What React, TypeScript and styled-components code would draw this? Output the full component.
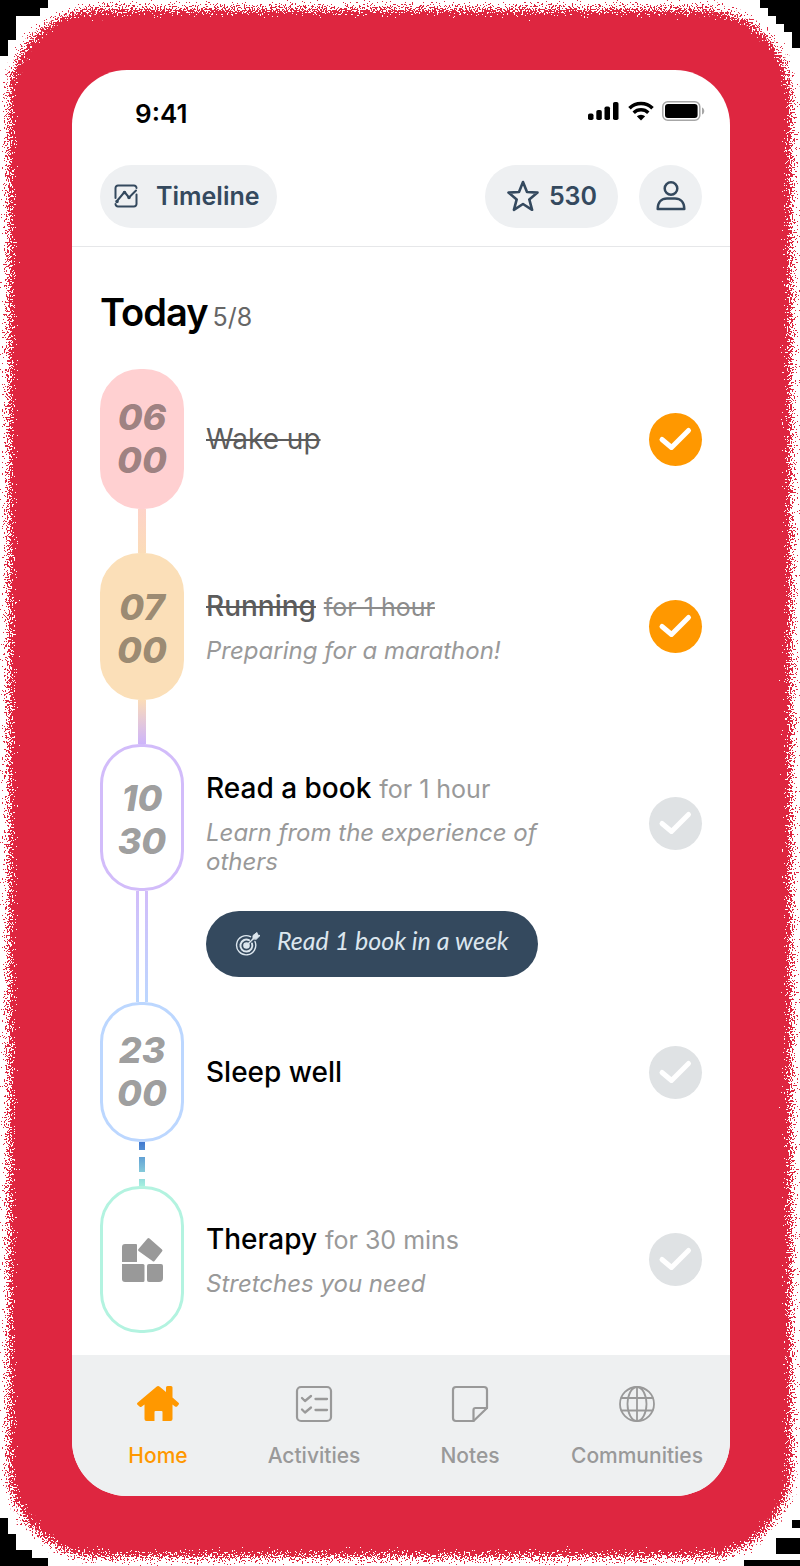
import React, { useState } from "react";
import styled, { createGlobalStyle, css } from "styled-components";

const Global = createGlobalStyle`
  *, *::before, *::after { box-sizing: border-box; }
  body { margin: 0; background: #ffffff; font-family: Inter, "Liberation Sans", sans-serif; }
  button, input { font: inherit; }
`;

const Page = styled.div`
  position: relative;
  isolation: isolate;
  overflow: hidden;
  padding: 70px 70px 70px 72px;
  background:
    conic-gradient(#000 0 0) 0 0 / 48px 8px no-repeat,
    conic-gradient(#000 0 0) 0 8px / 40px 8px no-repeat,
    conic-gradient(#000 0 0) 0 16px / 16px 8px no-repeat,
    conic-gradient(#000 0 0) 0 24px / 16px 16px no-repeat,
    conic-gradient(#000 0 0) 0 40px / 8px 16px no-repeat,
    conic-gradient(#000 0 0) 100% 0 / 40px 8px no-repeat,
    conic-gradient(#000 0 0) 100% 8px / 32px 8px no-repeat,
    conic-gradient(#000 0 0) 100% 16px / 24px 8px no-repeat,
    conic-gradient(#000 0 0) 100% 24px / 16px 8px no-repeat,
    conic-gradient(#000 0 0) 100% 32px / 8px 16px no-repeat,
    conic-gradient(#000 0 0) 0 100% / 48px 8px no-repeat,
    conic-gradient(#000 0 0) 0 calc(100% - 8px) / 32px 8px no-repeat,
    conic-gradient(#000 0 0) 0 calc(100% - 16px) / 16px 16px no-repeat,
    conic-gradient(#000 0 0) 0 calc(100% - 32px) / 8px 16px no-repeat,
    conic-gradient(#000 0 0) 100% 100% / 56px 6px no-repeat,
    conic-gradient(#000 0 0) 100% calc(100% - 12px) / 24px 16px no-repeat,
    conic-gradient(#000 0 0) 100% calc(100% - 38px) / 8px 8px no-repeat,
    #fff;
`;

const Glow = styled.div`
  position: absolute;
  z-index: -1;
  inset: 9px;
  border-radius: 90px;
  background: #de2841;
  filter: url(#rough-edge);
`;

const Filters = styled.svg`
  position: absolute;
  width: 0;
  height: 0;
`;

const Phone = styled.main`
  display: flex;
  flex-direction: column;
  overflow: hidden;
  border-radius: 55px;
  background: #fff;
`;

const StatusBar = styled.div`
  display: flex;
  align-items: center;
  justify-content: space-between;
  height: 86px;
  padding: 0 25px 0 63px;
  font-size: 26px;
  font-weight: 600;
`;

const StatusIcons = styled.div`
  display: flex;
  align-items: center;
  gap: 8px;
  padding-bottom: 4px;
`;

const TopBar = styled.header`
  display: flex;
  align-items: center;
  gap: 21px;
  height: 91px;
  padding: 0 28px 10px;
  border-bottom: 1px solid #e6e7e9;
`;

const Chip = styled.button<{ $round?: boolean }>`
  display: flex;
  align-items: center;
  justify-content: center;
  height: 63px;
  width: ${(p) => (p.$round ? "63px" : "auto")};
  padding: ${(p) => (p.$round ? "0" : "0 21px 0 22px")};
  gap: 10px;
  border: 0;
  border-radius: 32px;
  background: #eef0f2;
  color: #34495e;
  font-size: 25px;
  font-weight: 600;
`;

const TimelineChip = styled(Chip)`
  margin-right: auto;
  padding: 0 17px 0 13px;
  gap: 17px;
`;

const Schedule = styled.section`
  padding: 39px 28px 22px;
`;

const Heading = styled.h1`
  display: flex;
  align-items: baseline;
  gap: 5px;
  margin: 0 0 26px;
  font-size: 38px;
  line-height: 52px;
  font-weight: 600;
  letter-spacing: -1px;
`;

const Count = styled.span`
  color: #666;
  font-size: 25px;
  font-weight: 400;
  letter-spacing: 0;
`;

const List = styled.ol`
  margin: 0;
  padding: 0;
  list-style: none;
`;

const Row = styled.li`
  display: grid;
  grid-template-columns: 84px minmax(0, 1fr);
  column-gap: 22px;
`;

const Rail = styled.div`
  display: flex;
  flex-direction: column;
  align-items: center;
`;

const Pill = styled.div<{ $tall?: boolean; $fill?: string; $line?: string }>`
  display: flex;
  align-items: center;
  justify-content: center;
  width: 84px;
  height: ${(p) => (p.$tall ? 147 : 140)}px;
  border: 3px solid ${(p) => p.$line ?? p.$fill};
  border-radius: 40px;
  background: ${(p) => p.$fill ?? "#fff"};
`;

const Clock = styled.time<{ $tall?: boolean }>`
  display: flex;
  flex-direction: column;
  padding-top: ${(p) => (p.$tall ? 4 : 0)}px;
  color: rgba(0, 0, 0, 0.4);
  font-size: 36px;
  line-height: 43px;
  font-weight: 800;
  font-style: italic;
  text-align: center;
`;

type Link = "solid" | "double" | "dashed";

const Connector = styled.div<{ $kind: Link; $from: string; $to: string }>`
  flex: 1;
  min-height: 44px;
  ${(p) =>
    p.$kind === "solid" &&
    css`
      width: 8px;
      background: linear-gradient(${p.$from}, ${p.$to});
    `}
  ${(p) =>
    p.$kind === "double" &&
    css`
      width: 12px;
      background:
        linear-gradient(#fff, #fff) center / 6px 100% no-repeat,
        linear-gradient(${p.$from}, ${p.$to});
    `}
  ${(p) =>
    p.$kind === "dashed" &&
    css`
      width: 6px;
      background:
        repeating-linear-gradient(transparent 0 8px, #fff 8px 15px, transparent 15px 22px),
        linear-gradient(${p.$from}, ${p.$to});
    `}
`;

const Body = styled.div<{ $gap?: boolean }>`
  padding-bottom: ${(p) => (p.$gap ? "25px" : "0")};
`;

const Main = styled.div<{ $height: number }>`
  display: flex;
  align-items: center;
  justify-content: space-between;
  gap: 60px;
  min-height: ${(p) => p.$height}px;
`;

const Copy = styled.div`
  min-width: 0;
  max-width: 384px;
`;

const Title = styled.label`
  display: block;
  font-size: 28px;
  line-height: 34px;
`;

const Name = styled.span<{ $done?: boolean; $light?: boolean }>`
  color: ${(p) => (p.$done ? "#5c5c5c" : "#000")};
  font-weight: ${(p) => (p.$light ? 400 : 500)};
  text-decoration: ${(p) => (p.$done ? "line-through" : "none")};
`;

const Duration = styled.span<{ $done?: boolean }>`
  color: ${(p) => (p.$done ? "#8c8c8c" : "#999")};
  font-size: 25px;
  text-decoration: ${(p) => (p.$done ? "line-through" : "none")};
`;

const Note = styled.p`
  margin: 12px 0 0;
  color: #999;
  font-size: 24px;
  line-height: 29px;
  font-style: italic;
`;

const Tick = styled.span`
  display: grid;
  flex: none;
  width: 53px;
  height: 53px;

  > * { grid-area: 1 / 1; }
  > svg { pointer-events: none; }
`;

const TickInput = styled.input`
  appearance: none;
  width: 53px;
  height: 53px;
  margin: 0;
  border-radius: 50%;
  background: #dfe2e4;
  &:checked { background: #ff9800; }
`;

const Goal = styled.button`
  display: flex;
  align-items: center;
  gap: 16px;
  height: 66px;
  margin-top: 9px;
  padding: 0 29px;
  border: 0;
  border-radius: 33px;
  background: #34495e;
  color: #dce6ee;
  font-family: Lato, "Open Sans", sans-serif;
  font-size: 25px;
  font-style: italic;
`;

const GoalText = styled.span`
  padding-bottom: 8px;
`;

const Nav = styled.nav`
  display: grid;
  grid-template-columns: 156fr 156fr 156fr 178fr;
  height: 141px;
  padding: 29px 4px 0 8px;
  background: #eef0f1;
`;

const NavLink = styled.a<{ $active?: boolean }>`
  display: flex;
  flex-direction: column;
  align-items: center;
  gap: 18px;
  color: ${(p) => (p.$active ? "#ff9800" : "#999")};
  font-size: 21px;
  line-height: 28px;
  font-weight: 500;
  text-decoration: none;
`;

const line = { fill: "none", stroke: "currentColor", strokeLinecap: "round", strokeLinejoin: "round" } as const;

const SignalIcon = () => (
  <svg width="32" height="20" viewBox="0 0 32 20" aria-hidden="true">
    <rect x="0" y="12.500" width="5.500" height="6.500" rx="1.800" />
    <rect x="8.300" y="9" width="5.500" height="10" rx="1.800" />
    <rect x="16.500" y="5.500" width="5.500" height="13.500" rx="1.800" />
    <rect x="25" y="1" width="5.500" height="18" rx="1.800" />
  </svg>
);

const WifiIcon = () => (
  <svg width="26" height="20" viewBox="0 0 26 20" aria-hidden="true">
    <path d="M1.5 7.2a16.5 16.5 0 0 1 23 0" fill="none" stroke="#000" strokeWidth="3.6" />
    <path d="M5.7 11.7a10.5 10.5 0 0 1 14.6 0" fill="none" stroke="#000" strokeWidth="3.4" />
    <path d="M8.8 15.3a6.2 6.2 0 0 1 8.4 0L13 19.6z" />
  </svg>
);

const BatteryIcon = () => (
  <svg width="43" height="20" viewBox="0 0 43 20" aria-hidden="true">
    <rect x="0.8" y="0.8" width="37" height="18.4" rx="5" fill="none" stroke="#a6a6a6" strokeWidth="1.5" />
    <rect x="3" y="3" width="32.6" height="14" rx="3" />
    <path d="M40 6.5c3 1 3 6 0 7z" fill="#a6a6a6" />
  </svg>
);

const TimelineIcon = () => (
  <svg width="26" height="26" viewBox="0 0 26 26" aria-hidden="true" {...line} strokeWidth="2">
    <path d="M2.500 15V5a2.500 2.500 0 0 1 2.500-2.500h16a2.500 2.500 0 0 1 2.500 2.500" />
    <path d="M23.500 11.500V21a2.500 2.500 0 0 1-2.500 2.500H5A2.500 2.500 0 0 1 2.500 21" />
    <path d="M4 18l7.500-9 4.500 5.500L23 7.500" />
    <circle cx="4" cy="18.500" r="0.800" fill="currentColor" />
    <circle cx="11.500" cy="9.500" r="0.800" fill="currentColor" />
    <circle cx="16" cy="14.500" r="0.800" fill="currentColor" />
  </svg>
);

const StarIcon = () => (
  <svg width="32" height="32" viewBox="0 0 32 32" aria-hidden="true" {...line} strokeWidth="2.6">
    <path d="M16 2l4 10 10.500.6-8.200 6.800 2.800 10.400L16 24l-9.100 5.800 2.800-10.400L1.500 12.600 12 12z" />
  </svg>
);

const UserIcon = () => (
  <svg width="32" height="32" viewBox="0 0 32 32" aria-hidden="true" {...line} strokeWidth="2.5">
    <circle cx="16" cy="8.500" r="6.300" />
    <path d="M2.700 29c0-7 4-10.500 9.300-10.500h8c5.300 0 9.300 3.500 9.300 10.500z" />
  </svg>
);

const CheckMark = () => (
  <svg width="53" height="53" viewBox="0 0 53 53" aria-hidden="true" {...line} stroke="#fff" strokeWidth="5">
    <path d="M13 26.500l9.500 8L39.500 17.500" />
  </svg>
);

const BlocksIcon = () => (
  <svg width="42" height="46" viewBox="0 0 42 46" fill="#999" aria-hidden="true">
    <path d="M4 7h11a1 1 0 0 1 1 1v17H1V10a3 3 0 0 1 3-3z" />
    <path d="M26.500 1.500q1-1 2 0L41 12.500q1 1 0 2l-7.500 9.500q-1 1-2 0L17.500 14q-1-1 0-2z" />
    <path d="M1 27h21a1.500 1.500 0 0 1 1.500 1.500v15A1.500 1.500 0 0 1 22 45H4a3 3 0 0 1-3-3z" />
    <path d="M28 27h12a2 2 0 0 1 2 2v12a4 4 0 0 1-4 4H28a2 2 0 0 1-2-2V29a2 2 0 0 1 2-2z" />
  </svg>
);

const TargetIcon = () => (
  <svg width="26" height="26" viewBox="0 0 26 26" aria-hidden="true" {...line} strokeWidth="1.400">
    <path d="M15.500 5.700A9.600 9.600 0 1 0 20 10.500" />
    <path d="M14 9.200A6 6 0 1 0 17 12.500" strokeWidth="2" />
    <circle cx="11.500" cy="14.500" r="2.600" fill="currentColor" />
    <path d="M12 14l7-7" />
    <path d="M18 7.500V4.500L22 1.500l.5 2.500 2.500.5-3.500 3.500z" fill="currentColor" strokeWidth="1" />
  </svg>
);

const HomeIcon = () => (
  <svg width="42" height="40" viewBox="0 0 42 40" fill="currentColor" aria-hidden="true">
    <path d="M19.500 2.800q1.600-1.400 3.200 0L29 8V3.500q0-1.500 1.500-1.500h3.500q1.500 0 1.500 1.500v10l6 5.200q1 1 0 2l-1.200 1.500q-1 1-2.300.3L35.500 20.500V35q0 2-2 2h-8V28q0-1-1-1h-6q-1 0-1 1v9h-8q-2 0-2-2V20.500l-3 2.300q-1 .7-2-.3L.5 20.700q-1-1 0-2z" />
  </svg>
);

const ActivitiesIcon = () => (
  <svg width="40" height="40" viewBox="0 0 40 40" aria-hidden="true" {...line} strokeWidth="2.200">
    <rect x="3" y="3" width="34" height="34" rx="4" />
    <path d="M8 14l3 3 6-5M8 25.500l3 3 6-5M21.500 15h11.500M21.500 26h11.500" strokeWidth="2.300" />
  </svg>
);

const NotesIcon = () => (
  <svg width="40" height="40" viewBox="0 0 40 40" aria-hidden="true" {...line} strokeWidth="2.200">
    <path d="M23.500 37H6a3 3 0 0 1-3-3V6a3 3 0 0 1 3-3h28a3 3 0 0 1 3 3v18z" />
    <path d="M23.500 37V26a2 2 0 0 1 2-2H37" />
  </svg>
);

const GlobeIcon = () => (
  <svg width="40" height="40" viewBox="0 0 40 40" aria-hidden="true" {...line} strokeWidth="1.800">
    <circle cx="20" cy="20" r="17" />
    <ellipse cx="20" cy="20" rx="9.500" ry="17" />
    <path d="M20 3v34M4.500 14h31M4.500 26.500h31" />
  </svg>
);

type Item = {
  id: string;
  time?: [string, string];
  tall?: boolean;
  height: number;
  fill?: string;
  line?: string;
  title: string;
  light?: boolean;
  duration?: string;
  note?: string;
  goal?: string;
  done?: boolean;
  link?: { kind: Link; from: string; to: string };
};

const items: Item[] = [
  { id: "wake", time: ["06", "00"], height: 140, fill: "#ffd0d1", title: "Wake up", light: true, done: true,
    link: { kind: "solid", from: "#fed3c9", to: "#fbdcb8" } },
  { id: "run", time: ["07", "00"], tall: true, height: 147, fill: "#fbdfb8", title: "Running", duration: "for 1 hour",
    note: "Preparing for a marathon!", done: true, link: { kind: "solid", from: "#fbdcb8", to: "#cdb4fb" } },
  { id: "read", time: ["10", "30"], tall: true, height: 158, line: "#d2bcfa", title: "Read a book", duration: "for 1 hour",
    note: "Learn from the experience of others", goal: "Read 1 book in a week",
    link: { kind: "double", from: "#d2bcfa", to: "#bcd7ff" } },
  { id: "sleep", time: ["23", "00"], height: 140, line: "#bcd7ff", title: "Sleep well",
    link: { kind: "dashed", from: "#3f78d0", to: "#a5f0df" } },
  { id: "therapy", tall: true, height: 147, line: "#b3f3e0", title: "Therapy", duration: "for 30 mins",
    note: "Stretches you need" },
];

function TimelineRow({ item }: { item: Item }) {
  const [checked, setChecked] = useState(Boolean(item.done));
  return (
    <Row>
      <Rail>
        <Pill $tall={item.tall} $fill={item.fill} $line={item.line}>
          {item.time ? (
            <Clock $tall={item.tall} dateTime={item.time.join(":")}>
              <span>{item.time[0]}</span>
              <span>{item.time[1]}</span>
            </Clock>
          ) : (
            <BlocksIcon />
          )}
        </Pill>
        {item.link && <Connector $kind={item.link.kind} $from={item.link.from} $to={item.link.to} />}
      </Rail>
      <Body $gap={Boolean(item.goal)}>
        <Main $height={item.height}>
          <Copy>
            <Title htmlFor={item.id}>
              <Name $done={checked} $light={item.light}>{item.title}</Name>{" "}
              {item.duration && <Duration $done={checked}>{item.duration}</Duration>}
            </Title>
            {item.note && <Note>{item.note}</Note>}
          </Copy>
          <Tick>
            <TickInput id={item.id} type="checkbox" checked={checked} onChange={(e) => setChecked(e.target.checked)} />
            <CheckMark />
          </Tick>
        </Main>
        {item.goal && (
          <Goal type="button">
            <TargetIcon />
            <GoalText>{item.goal}</GoalText>
          </Goal>
        )}
      </Body>
    </Row>
  );
}

export default function App() {
  return (
    <Page>
      <Global />
      <Filters aria-hidden="true">
        <filter id="rough-edge" x="-5%" y="-5%" width="110%" height="110%">
          <feTurbulence type="fractalNoise" baseFrequency="0.6" numOctaves="2" seed="4" result="noise" />
          <feDisplacementMap in="SourceGraphic" in2="noise" scale="34" xChannelSelector="R" yChannelSelector="G" />
        </filter>
      </Filters>
      <Glow />
      <Phone>
        <StatusBar>
          <span>9:41</span>
          <StatusIcons>
            <SignalIcon />
            <WifiIcon />
            <BatteryIcon />
          </StatusIcons>
        </StatusBar>
        <TopBar>
          <TimelineChip type="button">
            <TimelineIcon />
            Timeline
          </TimelineChip>
          <Chip type="button">
            <StarIcon />
            530
          </Chip>
          <Chip type="button" $round aria-label="Profile">
            <UserIcon />
          </Chip>
        </TopBar>
        <Schedule>
          <Heading>
            Today <Count>5/8</Count>
          </Heading>
          <List>
            {items.map((item) => (
              <TimelineRow key={item.id} item={item} />
            ))}
          </List>
        </Schedule>
        <Nav>
          <NavLink href="#home" $active>
            <HomeIcon />
            Home
          </NavLink>
          <NavLink href="#activities">
            <ActivitiesIcon />
            Activities
          </NavLink>
          <NavLink href="#notes">
            <NotesIcon />
            Notes
          </NavLink>
          <NavLink href="#communities">
            <GlobeIcon />
            Communities
          </NavLink>
        </Nav>
      </Phone>
    </Page>
  );
}
